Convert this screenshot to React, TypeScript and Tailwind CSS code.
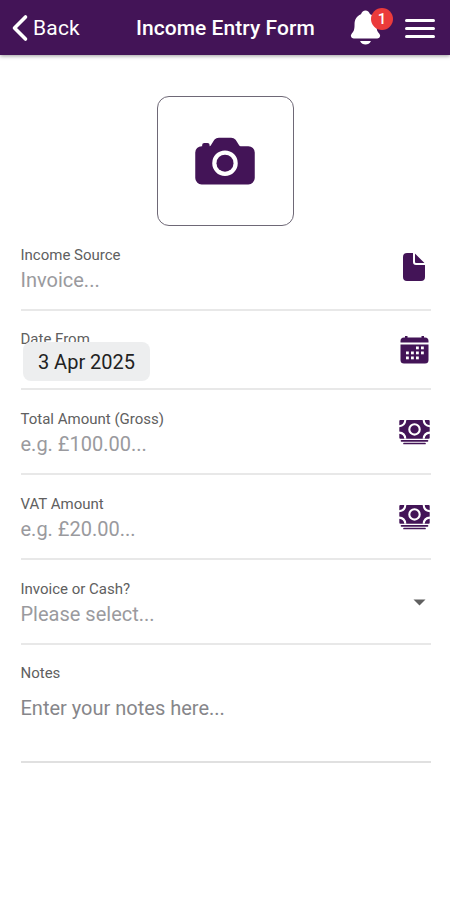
import type { ReactNode } from "react";
import { IoCamera, IoDocument, IoNotifications } from "react-icons/io5";

const CalendarIcon = () => {
    return <svg className="mt-[7px] mr-[2px] text-[#431457]" width="29" height="28" viewBox="0 0 29 28" fill="currentColor">
        <path d="M0.500 6.500V5Q0.500 1.500 4 1.500H5V0H7.500V1.500H21.500V0H24V1.500H25Q28.500 1.500 28.500 5V6.500Z" />
        <path d="M0.500 8.500H28.500V24Q28.500 27.500 25 27.500H4Q0.500 27.500 0.500 24Z" />
        <g fill="#ffffff">
            <rect x="16" y="10.500" width="2.800" height="2.800" />
            <rect x="21" y="10.500" width="2.800" height="2.800" />
            <rect x="6" y="15.500" width="2.800" height="2.800" />
            <rect x="11" y="15.500" width="2.800" height="2.800" />
            <rect x="16" y="15.500" width="2.800" height="2.800" />
            <rect x="21" y="15.500" width="2.800" height="2.800" />
            <rect x="6" y="20.500" width="2.800" height="2.800" />
            <rect x="11" y="20.500" width="2.800" height="2.800" />
            <rect x="16" y="20.500" width="2.800" height="2.800" />
        </g>
    </svg>
}

const CashIcon = () => {
    return <svg className="mt-[11px] mr-px text-[#431457]" width="31" height="25" viewBox="0 0 31 25" fill="none">
        <rect x="0.300" y="0" width="30.400" height="18.800" rx="1" fill="currentColor" />
        <g stroke="#ffffff" strokeWidth="2.100">
            <circle cx="15.500" cy="9.400" r="5.200" />
            <path d="M0 6.200Q6 5.800 6.300 0" />
            <path d="M31 6.200Q25 5.800 24.700 0" />
            <path d="M0 12.600Q6 13 6.300 18.800" />
            <path d="M31 12.600Q25 13 24.700 18.800" />
        </g>
        <path d="M2.500 20.800H28.500M5 23.500H26" stroke="currentColor" strokeWidth="1.700" strokeLinecap="round" />
    </svg>
}

const Header = () => {
    return <header className="flex h-[55px] items-center bg-[#431457] text-white shadow-[0_1px_4px_rgba(0,0,0,0.4)]">
        <button className="flex items-center pl-[11px]">
            <svg width="18" height="28" viewBox="0 0 18 28" fill="none" stroke="currentColor" strokeWidth="3.6" strokeLinecap="round" strokeLinejoin="round">
                <path d="M14.500 3L3.500 14L14.500 25" />
            </svg>
            <span className="ml-[4px] text-[21px] leading-7 tracking-[0.2px]">Back</span>
        </button>
        <h1 className="ml-[56px] whitespace-nowrap text-[21px] font-medium leading-7 tracking-[0.05px]">Income Entry Form</h1>
        <div className="ml-auto flex items-center pr-[15px]">
            <div className="relative mr-[20px]">
                <IoNotifications className="h-[39px] w-[39px]" />
                <span className="absolute top-0 left-[25px] flex h-[22px] w-[22px] items-center justify-center rounded-full bg-[#eb3b3b] text-[15px] font-medium">1</span>
            </div>
            <div className="flex w-[30px] flex-col gap-[5px] pt-[2px]">
                <div className="h-[3px] rounded-full bg-white" />
                <div className="h-[3px] rounded-full bg-white" />
                <div className="h-[3px] rounded-full bg-white" />
            </div>
        </div>
    </header>
}

const Field = ({
    label,
    placeholder,
    icon
}: {
    label: string,
    placeholder: string,
    icon?: ReactNode
}) => {
    return <div className="flex h-[85px] justify-between border-b-2 border-[#e8e8e8] pt-[19px]">
        <div>
            <div className="text-[15px] leading-5 text-[#606060]">{label}</div>
            <div className="mt-[3px] text-[20px] leading-6 text-[#9a9a9e]">{placeholder}</div>
        </div>
        {icon}
    </div>
}

export default function App() {
    return <div className="h-[900px] w-full overflow-hidden bg-white font-['Roboto',sans-serif]">
        <Header />
        <button className="mx-auto mt-[41px] flex h-[130px] w-[137px] items-center justify-center rounded-[12px] border border-[#6e6876] pb-px text-[#431457]">
            <IoCamera className="h-[68px] w-[68px]" />
        </button>
        <div className="mr-[19px] ml-[20.5px]">
            <Field label="Income Source" placeholder="Invoice..." icon={<IoDocument className="mt-[6px] mr-px h-[32px] w-[32px] text-[#431457]" />} />

            <div className="flex h-[79px] justify-between border-b-2 border-[#e8e8e8] pt-[18px]">
                <div>
                    <div className="text-[15px] leading-5 text-[#606060]">Date From</div>
                    <div className="relative -mt-[7px] ml-[2.5px] flex h-[39px] w-[127px] items-center justify-center rounded-[8px] bg-[#edeeef] text-[20px] text-[#222222]">3 Apr 2025</div>
                </div>
                <CalendarIcon />
            </div>

            <Field label="Total Amount (Gross)" placeholder="e.g. £100.00..." icon={<CashIcon />} />
            <Field label="VAT Amount" placeholder="e.g. £20.00..." icon={<CashIcon />} />
            <Field label="Invoice or Cash?" placeholder="Please select..." icon={
                <svg className="mt-[20px] mr-[5px]" width="13" height="7" viewBox="0 0 13 7" fill="#606060">
                    <path d="M0.500 0.500H12.500L6.500 6.500Z" />
                </svg>
            } />

            <div className="h-[118px] border-b-2 border-[#e0e0e0] pt-[18px]">
                <div className="text-[15px] leading-5 text-[#606060]">Notes</div>
                <div className="mt-[13px] text-[20px] leading-6 text-[#86868a]">Enter your notes here...</div>
            </div>
        </div>
    </div>
}
